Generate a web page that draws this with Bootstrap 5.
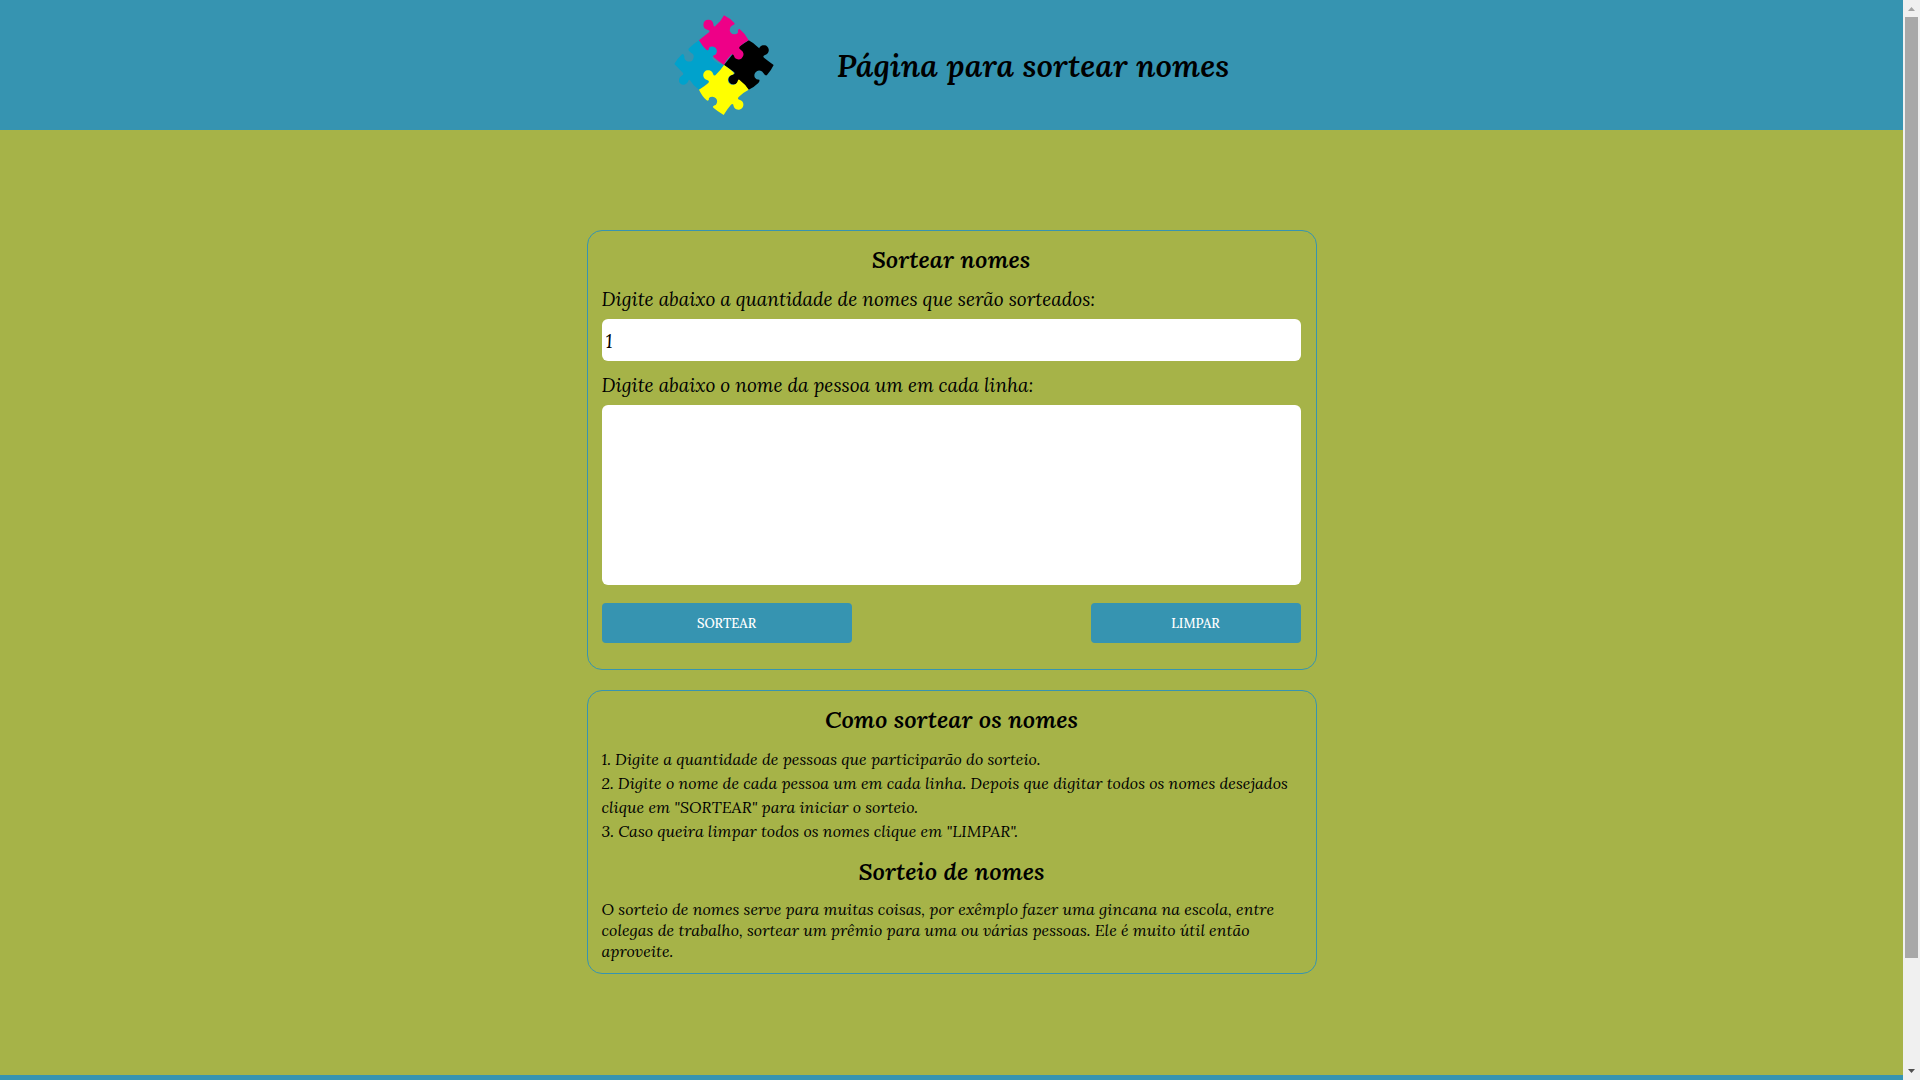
<!DOCTYPE html>
<html lang="pt-BR">
<head>
<meta charset="utf-8">
<meta name="viewport" content="width=device-width, initial-scale=1">
<title>Página para sortear nomes</title>
<link href="https://cdn.jsdelivr.net/npm/bootstrap@5.3.0/dist/css/bootstrap.min.css" rel="stylesheet">
<style>
  :root { --azul: #3694b1; --verde: #a6b348; }
  body { font-family: Lora, "Liberation Serif", serif; color: #000; background: var(--verde); }
  .topo { background: var(--azul); gap: 63px; padding: 15px; }
  .logo { width: 100px; height: 100px; }
  .titulo { font-size: 32px; line-height: 44px; font-weight: 600; padding-top: 2px; }
  .conteudo { max-width: 730px; padding-top: 100px; gap: 20px; }
  .painel { border: 1px solid var(--azul); border-radius: 15px; padding: 14px 14px 11px; }
  .painel-form { padding: 14px 15px 26px 14px; }
  .subtitulo { font-size: 24px; line-height: 30px; font-weight: 600; margin-bottom: 12px; }
  .painel-form .subtitulo { margin-bottom: 9px; }
  .rotulo { font-size: 19px; line-height: 30px; margin-bottom: 5px; }
  .campo, .campo:focus { border: 0; border-radius: 6px; padding: 4px; font-size: 20px; font-style: italic; color: #000; background: #fff; }
  .campo-numero { height: 42px; margin-bottom: 9px; }
  .campo-nomes { height: 180px; resize: none; margin-bottom: 18px; }
  .acao, .acao:hover { height: 40px; border: 0; border-radius: 4px; padding: 2px 0 0; font-size: 13px; font-weight: 500; color: #fff; background: var(--azul); }
  .sortear { width: 250px; }
  .limpar { width: 210px; }
  .passos { font-size: 16px; line-height: 24px; margin-bottom: 14px; }
  .texto { font-size: 16px; line-height: 21px; }
  .rodape { background: var(--azul); height: 5px; }
  .barra { width: 17px; background: #f0f0f0; padding: 0 2px; }
  .seta { height: 17px; width: 13px; }
  .trilho { flex: 1 1 0; }
  .cursor-barra { height: 90%; background: #a8a8a8; }
</style>
<script src="https://cdn.jsdelivr.net/npm/bootstrap@5.3.0/dist/js/bootstrap.bundle.min.js"></script>
</head>
<body>
<div class="d-flex vh-100 overflow-hidden">
  <div class="d-flex flex-column flex-grow-1">
    <header class="topo d-flex justify-content-center align-items-center">
      <svg class="logo" viewBox="46 45 300 300" role="img" aria-label="Quebra-cabeça">
        <path fill="#00a2cc" d="M121 121Q132 142 149 138A15 15 0 1 1 168 165Q157 171 163 178Q177 193 196 195Q188 213 176 225L121 269Q103 257 94 241Q90 236 87 247A14 14 0 1 1 68 228Q78 223 71 217L47 192Q56 176 70 163Q74 160 77 169A14 14 0 1 0 97 158Q85 150 91 145Q105 131 121 121Z"/>
        <path fill="#000" d="M270 121Q284 128 298 142Q303 146 301 146A15 15 0 1 1 319 165Q310 169 317 174Q328 183 345 195Q337 212 325 225Q320 229 314 219A14 14 0 0 0 289 233Q292 239 302 239Q304 243 299 249Q286 262 270 269L244 243Q239 237 237 247A15 15 0 1 1 221 224Q232 222 226 216L196 195L240 140Z"/>
        <path fill="#ee0087" d="M196 46Q213 54 227 69Q230 73 222 76A14 14 0 1 0 238 98Q236 88 243 87Q260 101 270 121Q255 129 245 138Q237 145 247 150A15 15 0 1 1 225 166Q221 159 216 166Q203 179 196 195Q178 184 165 172Q160 166 170 164A14 14 0 1 0 151 143Q151 154 143 149Q131 139 121 121Q138 107 151 97Q156 91 146 89A15 15 0 1 1 164 72Q165 85 172 76Q187 64 196 46Z"/>
        <path fill="#ff0" d="M196 195Q213 206 224 217Q229 223 219 225A15 15 0 1 0 237 244Q239 233 246 243Q259 252 270 269Q254 277 240 291Q234 297 244 300A15 15 0 1 1 225 319Q224 309 217 314Q206 326 195 345Q176 333 164 323Q160 318 171 315A14 14 0 1 0 151 294Q151 306 144 301Q131 290 121 269Q137 260 149 249Q154 243 145 240A15 15 0 1 1 163 221Q166 231 173 223Q186 210 196 195Z"/>
      </svg>
      <h1 class="titulo fst-italic mb-0">Página para sortear nomes</h1>
    </header>
    <main class="conteudo d-flex flex-column flex-grow-1 w-100 mx-auto">
      <form class="painel painel-form">
        <h2 class="subtitulo text-center fst-italic">Sortear nomes</h2>
        <label class="rotulo d-block fst-italic" for="quantidade">Digite abaixo a quantidade de nomes que serão sorteados:</label>
        <input class="campo campo-numero form-control" id="quantidade" type="text" inputmode="numeric" value="1">
        <label class="rotulo d-block fst-italic" for="nomes">Digite abaixo o nome da pessoa um em cada linha:</label>
        <textarea class="campo campo-nomes form-control" id="nomes"></textarea>
        <div class="d-flex justify-content-between">
          <button class="acao sortear btn" type="button">SORTEAR</button>
          <button class="acao limpar btn" type="reset">LIMPAR</button>
        </div>
      </form>
      <section class="painel">
        <h2 class="subtitulo text-center fst-italic">Como sortear os nomes</h2>
        <p class="passos fst-italic">1. Digite a quantidade de pessoas que participarão do sorteio.<br>2. Digite o nome de cada pessoa um em cada linha. Depois que digitar todos os nomes desejados clique em "SORTEAR" para iniciar o sorteio.<br>3. Caso queira limpar todos os nomes clique em "LIMPAR".</p>
        <h2 class="subtitulo text-center fst-italic">Sorteio de nomes</h2>
        <p class="texto fst-italic mb-0">O sorteio de nomes serve para muitas coisas, por exêmplo fazer uma gincana na escola, entre colegas de trabalho, sortear um prêmio para uma ou várias pessoas. Ele é muito útil então aproveite.</p>
      </section>
    </main>
    <footer class="rodape"></footer>
  </div>
  <div class="barra d-flex flex-column flex-shrink-0" aria-hidden="true">
    <svg class="seta" viewBox="0 0 13 17"><path fill="#a3a3a3" d="M3 11L6.500 7L10 11Z"/></svg>
    <div class="trilho"><div class="cursor-barra"></div></div>
    <svg class="seta" viewBox="0 0 13 17"><path fill="#505050" d="M3 6L6.500 10L10 6Z"/></svg>
  </div>
</div>
</body>
</html>
